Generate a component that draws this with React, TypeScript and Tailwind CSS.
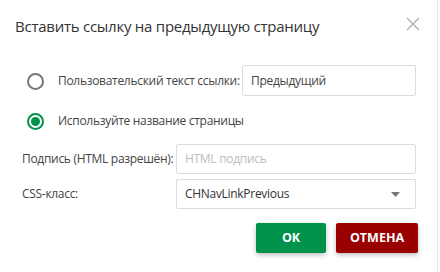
import React from "react";

export default function App() {
  const font = { fontFamily: '"Open Sans", "Noto Sans", sans-serif' };
  return (
    <div className="w-[440px] h-[272px] bg-white flex" style={font}>
      <div className="w-[438px] h-full border-r border-[#e4e4e4] flex flex-col">
        <div className="flex items-center justify-between pl-[15px] pr-[17px] pt-[14px] pb-[14px] h-[52px]">
          <div className="text-[15px] leading-[24px] tracking-[-0.25px] text-[#333]">Вставить ссылку на предыдущую страницу</div>
          <svg width="14" height="14" viewBox="0 0 14 14" className="mt-[-4px]">
            <path d="M1 1 L13 13 M13 1 L1 13" stroke="#b0b0b0" strokeWidth="1.4" fill="none" />
          </svg>
        </div>
        <div className="mt-[13px] flex items-center h-[31px] pl-[27px]">
          <div className="w-[17px] h-[17px] rounded-full border-2 border-[#777] shrink-0 mt-[2px]" />
          <div className="ml-[14px] text-[12px] tracking-[-0.3px] text-[#444] w-[184px] whitespace-nowrap">Пользовательский текст ссылки:</div>
          <div className="w-[174px] h-[31px] border border-[#dcdcdc] rounded-[2px] flex items-center pl-[8px] text-[12px] tracking-[-0.3px] text-[#444]">Предыдущий</div>
        </div>
        <div className="mt-[10px] flex items-center h-[30px] pl-[27px]">
          <div className="w-[17px] h-[17px] rounded-full border-2 border-[#00914a] shrink-0 flex items-center justify-center">
            <div className="w-[9px] h-[9px] rounded-full bg-[#00914a]" />
          </div>
          <div className="ml-[14px] text-[12px] tracking-[-0.3px] text-[#444] whitespace-nowrap">Используйте название страницы</div>
        </div>
        <div className="mt-[8px] flex items-center h-[30px] pl-[22px]">
          <div className="w-[154px] text-[12px] tracking-[-0.3px] text-[#444] whitespace-nowrap">Подпись (HTML разрешён):</div>
          <div className="w-[240px] h-[30px] border border-[#dcdcdc] rounded-[2px] flex items-center pl-[8px] text-[12px] tracking-[-0.3px] text-[#bdbdbd]">HTML подпись</div>
        </div>
        <div className="mt-[5px] flex items-center h-[30px] pl-[22px]">
          <div className="w-[154px] text-[12px] tracking-[-0.3px] text-[#444] whitespace-nowrap">CSS-класс:</div>
          <div className="w-[240px] h-[30px] border border-[#dcdcdc] rounded-[2px] flex items-center justify-between pl-[8px] pr-[15px] text-[12px] tracking-[-0.3px] text-[#333]">
            <span>CHNavLinkPrevious</span>
            <svg width="9" height="5" viewBox="0 0 9 5">
              <path d="M0 0 L9 0 L4.5 5 Z" fill="#777" />
            </svg>
          </div>
        </div>
        <div className="mt-[14px] flex justify-end gap-[10px] pr-[19px]">
          <button className="w-[70px] h-[30px] rounded-[2px] bg-[#00914a] text-white font-bold text-[12.5px] shadow-[0_2px_5px_rgba(0,0,0,0.25)]">OK</button>
          <button className="w-[82px] h-[30px] rounded-[2px] bg-[#990000] text-white font-bold text-[12.5px] shadow-[0_2px_5px_rgba(0,0,0,0.25)]">ОТМЕНА</button>
        </div>
      </div>
    </div>
  );
}
